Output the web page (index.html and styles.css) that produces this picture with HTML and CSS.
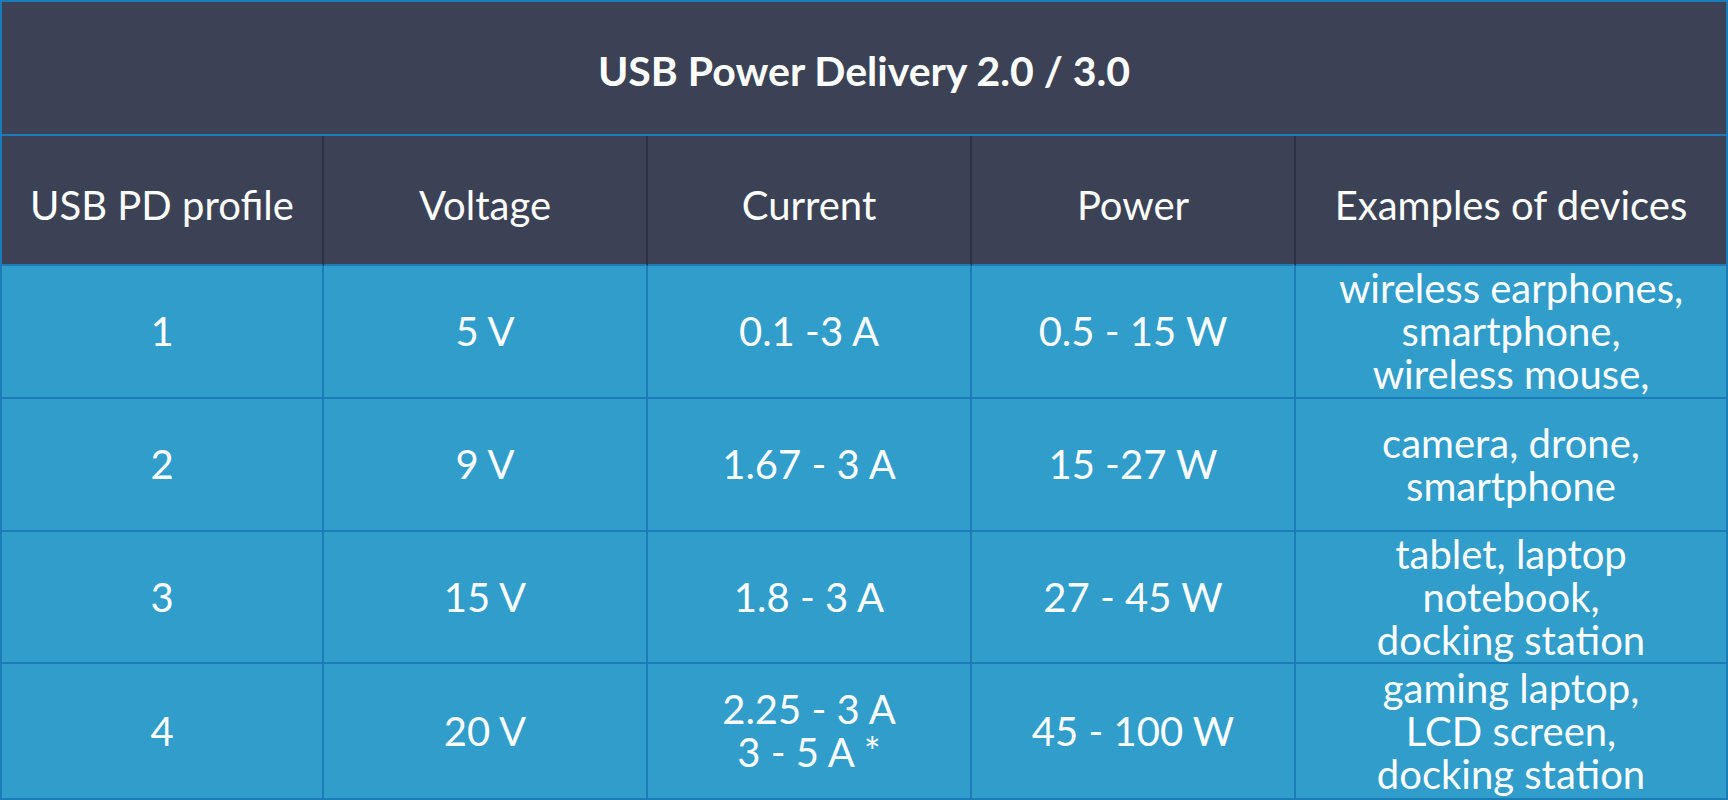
FILE: index.html
```html
<!DOCTYPE html>
<html lang="en">
<head>
<meta charset="utf-8">
<title>USB Power Delivery 2.0 / 3.0</title>
<link rel="stylesheet" href="styles.css">
</head>
<body>
<div class="pd-table">
  <div class="cell title">USB Power Delivery 2.0 / 3.0</div>

  <div class="cell head">USB PD profile</div>
  <div class="cell head">Voltage</div>
  <div class="cell head">Current</div>
  <div class="cell head">Power</div>
  <div class="cell head">Examples of devices</div>

  <div class="cell body">1</div>
  <div class="cell body">5 V</div>
  <div class="cell body">0.1 -3 A</div>
  <div class="cell body">0.5 - 15 W</div>
  <div class="cell body">wireless earphones,<br>smartphone,<br>wireless mouse,</div>

  <div class="cell body">2</div>
  <div class="cell body">9 V</div>
  <div class="cell body">1.67 - 3 A</div>
  <div class="cell body">15 -27 W</div>
  <div class="cell body">camera, drone,<br>smartphone</div>

  <div class="cell body">3</div>
  <div class="cell body">15 V</div>
  <div class="cell body">1.8 - 3 A</div>
  <div class="cell body">27 - 45 W</div>
  <div class="cell body">tablet, laptop<br>notebook,<br>docking station</div>

  <div class="cell body">4</div>
  <div class="cell body">20 V</div>
  <div class="cell body">2.25 - 3 A<br>3 - 5 A *</div>
  <div class="cell body">45 - 100 W</div>
  <div class="cell body">gaming laptop,<br>LCD screen,<br>docking station</div>
</div>
</body>
</html>
```

FILE: styles.css
```css
html, body {
  margin: 0;
  padding: 0;
  background: #ffffff;
}

.pd-table {
  box-sizing: border-box;
  width: 1728px;
  height: 800px;
  display: grid;
  grid-template-columns: 322px 324px 324px 324px 432px;
  grid-template-rows: 134px 130px 133px 133px 132px 136px;
  border-top: 2px solid #1b7cb8;
  border-left: 2px solid #1b7cb8;
  font-family: Lato, "Open Sans", sans-serif;
  color: #ffffff;
}

.cell {
  box-sizing: border-box;
  display: flex;
  align-items: center;
  justify-content: center;
  text-align: center;
  border-right: 2px solid #1b7cb8;
  border-bottom: 2px solid #1b7cb8;
}

.title {
  grid-column: 1 / -1;
  background: #3c4255;
  font-weight: 700;
  font-size: 41px;
  padding-top: 5px;
}

.head {
  background: #3c4255;
  font-size: 40px;
  border-right-color: #2a3444;
  padding-top: 10px;
}

.head:nth-child(6) {
  border-right-color: #1b7cb8;
}

.body {
  background: #309dcb;
  font-size: 40px;
  line-height: 43px;
}
```
